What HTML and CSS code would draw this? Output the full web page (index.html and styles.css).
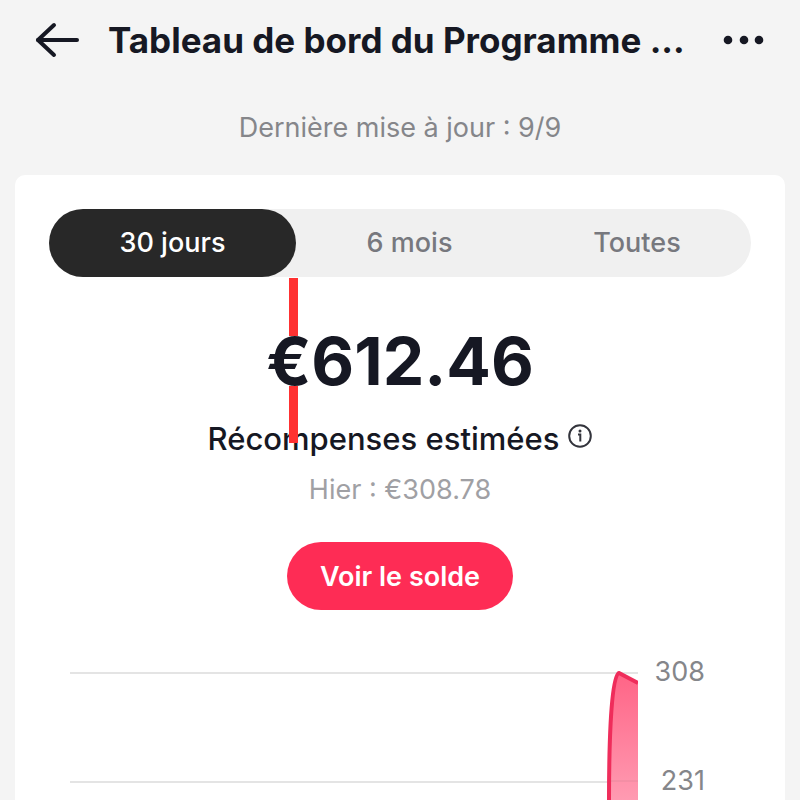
FILE: index.html
```html
<!DOCTYPE html>
<html lang="fr">

<head>
    <meta charset="UTF-8">
    <meta name="viewport" content="width=device-width, initial-scale=1.0">
    <title>Tableau de bord</title>
    <link rel="stylesheet" href="styles.css">
</head>

<body>
    <header class="header">
        <button class="icon-btn" aria-label="Retour">
            <svg width="44" height="38" viewBox="0 0 44 38" fill="none" stroke="#161823" stroke-width="4" stroke-linecap="round" stroke-linejoin="round">
                <path d="M19 4 L3 19 L19 34" />
                <path d="M3 19 H42" />
            </svg>
        </button>
        <h1 class="title">Tableau de bord du Programme ...</h1>
        <button class="icon-btn" aria-label="Plus">
            <svg width="42" height="38" viewBox="0 0 42 38" fill="#161823">
                <circle cx="5" cy="19" r="4.3" />
                <circle cx="21" cy="19" r="4.3" />
                <circle cx="36" cy="19" r="4.3" />
            </svg>
        </button>
    </header>
    <p class="update">Dernière mise à jour : 9/9</p>

    <main class="card">
        <div class="tabs">
            <button class="tab active">30 jours</button>
            <button class="tab">6 mois</button>
            <button class="tab">Toutes</button>
        </div>

        <section class="summary">
            <div class="amount">€612.46</div>
            <div class="label">
                <span>Récompenses estimées</span>
                <svg width="24" height="24" viewBox="0 0 24 24" fill="none" stroke="#33343c" stroke-width="2">
                    <circle cx="12" cy="12" r="10.8" />
                    <path d="M10 10.5 H12.3 V17.5" />
                    <circle cx="12" cy="7" r="1.5" fill="#33343c" stroke="none" />
                </svg>
            </div>
            <div class="yesterday">Hier : €308.78</div>
            <button class="balance">Voir le solde</button>
            <span class="marker"></span>
        </section>

        <section class="chart">
            <div class="row"><span class="line"></span><span class="value">308</span></div>
            <div class="row"><span class="line"></span><span class="value">231</span></div>
            <svg class="curve" width="34" height="130" viewBox="0 0 34 130">
                <defs>
                    <linearGradient id="fill" x1="0" y1="0" x2="0" y2="1">
                        <stop offset="0" stop-color="#ff6486" />
                        <stop offset="1" stop-color="#ff9bb2" />
                    </linearGradient>
                </defs>
                <path d="M5 130 C5 60 8 2 15 2 L34 12 V130 Z" fill="url(#fill)" />
                <path d="M5 110 H34" stroke="#e98a9f" stroke-width="1" />
                <path d="M5 130 C5 60 8 2 15 2 L34 12" fill="none" stroke="#ef2d5b" stroke-width="4" />
            </svg>
        </section>
    </main>
</body>

</html>
```
FILE: styles.css
```css
body {
    display: flex;
    flex-direction: column;
    margin: 0;
    height: 100vh;
    background-color: #f4f4f4;
    font-family: Inter, 'Liberation Sans', sans-serif;
    color: #161823;
}

button {
    border: none;
    padding: 0;
    background: none;
    font-family: inherit;
    color: inherit;
}

.header {
    display: flex;
    align-items: center;
    height: 80px;
    padding: 0 35px;
}

.icon-btn {
    display: flex;
}

.title {
    flex: 1;
    margin: 0 0 0 29px;
    font-size: 35px;
    line-height: 40px;
    font-weight: 700;
    white-space: nowrap;
}

.update {
    margin: 0;
    padding: 32px 0 31px;
    font-size: 27px;
    line-height: 32px;
    text-align: center;
    color: #85868a;
}

/* the chart goes on below the fold */
.card {
    flex: 1;
    min-height: 0;
    overflow: hidden;
    margin: 0 15px;
    padding: 34px 34px 0;
    border-radius: 10px 10px 0 0;
    background-color: white;
}

.tabs {
    display: grid;
    grid-template-columns: 247fr 227fr 228fr;
    border-radius: 34px;
    background-color: #f0f0f0;
}

.tab {
    height: 68px;
    padding-bottom: 2px;
    font-size: 27px;
    font-weight: 500;
    color: #77787e;
}

.tab.active {
    border-radius: 34px;
    background-color: #282828;
    color: white;
}

.summary {
    position: relative;
    display: flex;
    flex-direction: column;
    align-items: center;
    padding-top: 59px;
}

.amount {
    position: relative;
    z-index: 1;
    background-color: white;
    font-size: 66px;
    line-height: 50px;
    font-weight: 700;
}

.label {
    display: flex;
    gap: 9px;
    margin-top: 34px;
    font-size: 31px;
    line-height: 38px;
    font-weight: 500;
}

.label svg {
    margin-top: 4px;
}

.yesterday {
    margin-top: 16px;
    font-size: 27px;
    line-height: 32px;
    color: #a0a0a4;
}

.balance {
    margin-top: 36px;
    padding: 0 33px;
    height: 68px;
    border-radius: 34px;
    background-color: #fe2c55;
    font-size: 27px;
    font-weight: 600;
    color: white;
}

/* red rule passes behind the amount and over the label */
.marker {
    position: absolute;
    top: 1px;
    left: calc(50% - 111px);
    width: 9px;
    height: 165px;
    background-color: #ff3131;
}

.chart {
    position: relative;
    margin-top: 47px;
    padding: 0 46px 0 21px;
}

.row {
    display: flex;
    align-items: center;
    gap: 16px;
    height: 32px;
    margin-bottom: 77px;
}

.line {
    flex: 1;
    height: 2px;
    background-color: #e4e4e4;
}

.value {
    width: 51px;
    text-align: right;
    font-size: 27px;
    line-height: 28px;
    padding-bottom: 2px;
    color: #85868a;
}

.curve {
    position: absolute;
    top: 14px;
    right: 113px;
}
```
